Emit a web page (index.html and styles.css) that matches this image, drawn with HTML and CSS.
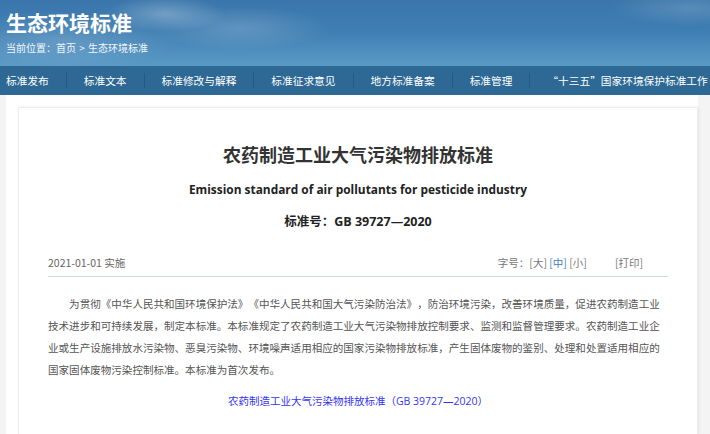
FILE: index.html
```html
<!DOCTYPE html>
<html lang="zh-CN">
<head>
<meta charset="utf-8">
<title>生态环境标准</title>
<link rel="stylesheet" href="styles.css">
</head>
<body>
<header class="banner">
  <h1 class="site-title">生态环境标准</h1>
  <div class="crumbs">当前位置：<a href="#">首页</a> &gt; <a href="#">生态环境标准</a></div>
</header>
<nav class="nav">
  <a class="nav-item first" href="#">标准发布</a>
  <a class="nav-item" href="#">标准文本</a>
  <a class="nav-item" href="#">标准修改与解释</a>
  <a class="nav-item" href="#">标准征求意见</a>
  <a class="nav-item" href="#">地方标准备案</a>
  <a class="nav-item" href="#">标准管理</a>
  <a class="nav-item" href="#">“十三五”国家环境保护标准工作</a>
</nav>
<main class="main">
  <div class="wrap">
    <article class="card">
      <h2 class="doc-title">农药制造工业大气污染物排放标准</h2>
      <p class="doc-en">Emission standard of air pollutants for pesticide industry</p>
      <p class="doc-no">标准号：GB 39727—2020</p>
      <div class="meta">
        <span class="date">2021-01-01 实施</span>
        <span class="tools">字号：<a href="#">[大]</a> <a class="on" href="#">[中]</a> <a href="#">[小]</a><a class="print" href="#">[打印]</a></span>
      </div>
      <p class="body-text">为贯彻《中华人民共和国环境保护法》《中华人民共和国大气污染防治法》，防治环境污染，改善环境质量，促进农药制造工业技术进步和可持续发展，制定本标准。本标准规定了农药制造工业大气污染物排放控制要求、监测和监督管理要求。农药制造工业企业或生产设施排放水污染物、恶臭污染物、环境噪声适用相应的国家污染物排放标准，产生固体废物的鉴别、处理和处置适用相应的国家固体废物污染控制标准。本标准为首次发布。</p>
      <p class="doc-link"><a href="#">农药制造工业大气污染物排放标准（GB 39727—2020）</a></p>
    </article>
  </div>
</main>
</body>
</html>
```

FILE: styles.css
```css
html, body {
  margin: 0;
  padding: 0;
}
body {
  width: 710px;
  height: 434px;
  overflow: hidden;
  font-family: "Noto Sans CJK SC", "Noto Sans", sans-serif;
  background: #f4f4f4;
  text-spacing-trim: space-all;
}
a { text-decoration: none; color: inherit; }

.banner {
  height: 66px;
  box-sizing: border-box;
  padding: 8px 0 0 6px;
  background:
    radial-gradient(ellipse 60px 18px at 165px 14px, rgba(255,255,255,0.28), rgba(255,255,255,0) 100%),
    radial-gradient(ellipse 90px 22px at 240px 28px, rgba(255,255,255,0.18), rgba(255,255,255,0) 100%),
    radial-gradient(ellipse 120px 30px at 60px 40px, rgba(255,255,255,0.16), rgba(255,255,255,0) 100%),
    radial-gradient(ellipse 80px 18px at 690px 8px, rgba(255,255,255,0.15), rgba(255,255,255,0) 100%),
    linear-gradient(180deg, #3a76ab 0%, #3e7db2 45%, #5a9ac6 100%);
  color: #fff;
}
.site-title {
  margin: 0;
  font-size: 21px;
  line-height: 28px;
  font-weight: 700;
}
.crumbs {
  margin-top: 5px;
  font-size: 10px;
  line-height: 14px;
  color: #f0f6fb;
  word-spacing: 1px;
}

.nav {
  display: flex;
  align-items: center;
  height: 29px;
  padding-left: 6px;
  background: #2d6994;
  white-space: nowrap;
  overflow: hidden;
}
.nav-item {
  flex: none;
  font-size: 10.7px;
  line-height: 15px;
  color: #fff;
  padding: 0 17px;
  border-left: 1px solid #255a81;
}
.nav-item.first {
  padding-left: 0;
  border-left: none;
}

.main {
  height: 339px;
}
.wrap {
  margin-left: 6px;
  width: 692px;
  height: 100%;
  box-sizing: border-box;
  padding: 12px 0 0 12px;
  background: #fff;
}
.card {
  height: 100%;
  box-sizing: border-box;
  border: 1px solid #ececec;
  border-bottom: none;
  box-shadow: 1px 0 3px rgba(0,0,0,0.07);
  padding: 34px 29px 0 29px;
}
.doc-title {
  margin: 0;
  text-align: center;
  font-size: 18px;
  line-height: 24px;
  font-weight: 700;
  color: #333;
}
.doc-en {
  margin: 14px 0 0;
  text-align: center;
  font-family: "Open Sans", "Noto Sans", sans-serif;
  font-size: 11.9px;
  line-height: 18px;
  font-weight: 700;
  color: #222;
}
.doc-no {
  margin: 15px 0 0;
  text-align: center;
  font-family: "Open Sans", "Noto Sans CJK SC", sans-serif;
  font-size: 12.5px;
  line-height: 18px;
  font-weight: 700;
  color: #222;
}
.meta {
  margin-top: 24px;
  display: flex;
  justify-content: space-between;
  align-items: center;
  padding: 0 0 5px;
  border-bottom: 1px solid #c9dbe9;
  font-size: 10.5px;
  line-height: 16px;
  color: #666;
}
.tools {
  padding-right: 25px;
  color: #777;
}
.tools a { color: #777; }
.tools a.on { color: #3d7fc1; }
.tools a.print { margin-left: 28px; }

.body-text {
  margin: 16px 0 0;
  font-size: 10.55px;
  line-height: 22px;
  text-indent: 2em;
  color: #555;
}
.doc-link {
  margin: 9px 0 0;
  text-align: center;
  font-family: "Open Sans", "Noto Sans CJK SC", sans-serif;
  font-size: 10.5px;
  line-height: 22px;
}
.doc-link a { color: #3434f5; }
```
